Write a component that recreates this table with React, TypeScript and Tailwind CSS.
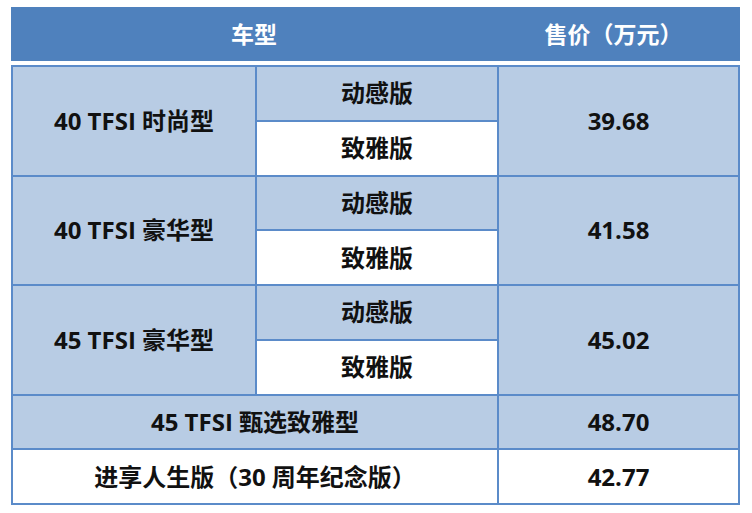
import { Fragment } from 'react';

const font = { fontFamily: '"Open Sans", "Noto Sans CJK SC", sans-serif' };

type Group = { name: string; price: string };

const groups: Group[] = [
  { name: '40 TFSI 时尚型', price: '39.68' },
  { name: '40 TFSI 豪华型', price: '41.58' },
  { name: '45 TFSI 豪华型', price: '45.02' },
];

const cell = 'flex items-center justify-center text-[24px] font-bold text-[#111]';

export default function App() {
  return (
    <div className="w-[752px] h-[513px] bg-white pt-[7px] pl-[11px]" style={font}>
      <div className="w-[729px]">
        {/* header */}
        <div className="grid h-[54px] grid-cols-[486px_243px] bg-[#4f81bd] text-white">
          <div className="flex items-center justify-center text-[23px] font-bold">车型</div>
          <div className="flex items-center justify-center pr-[10px] text-[23px] font-bold">售价（万元）</div>
        </div>
        <div className="h-[4px] bg-white" />
        {/* body */}
        <div className="grid h-[440px] grid-cols-[242px_240px_239px] grid-rows-[repeat(8,1fr)] gap-[2px] bg-[#5b8bc9] p-[2px]">
          {groups.map((g) => (
            <Fragment key={g.name}>
              <div className={`${cell} row-span-2 bg-[#b8cce4]`}>{g.name}</div>
              <div className={`${cell} bg-[#b8cce4]`}>动感版</div>
              <div className={`${cell} row-span-2 bg-[#b8cce4]`}>{g.price}</div>
              <div className={`${cell} bg-white`}>致雅版</div>
            </Fragment>
          ))}
          <div className={`${cell} col-span-2 bg-[#b8cce4]`}>45 TFSI 甄选致雅型</div>
          <div className={`${cell} bg-[#b8cce4]`}>48.70</div>
          <div className={`${cell} col-span-2 bg-white`}>进享人生版（30 周年纪念版）</div>
          <div className={`${cell} bg-white`}>42.77</div>
        </div>
      </div>
    </div>
  );
}
